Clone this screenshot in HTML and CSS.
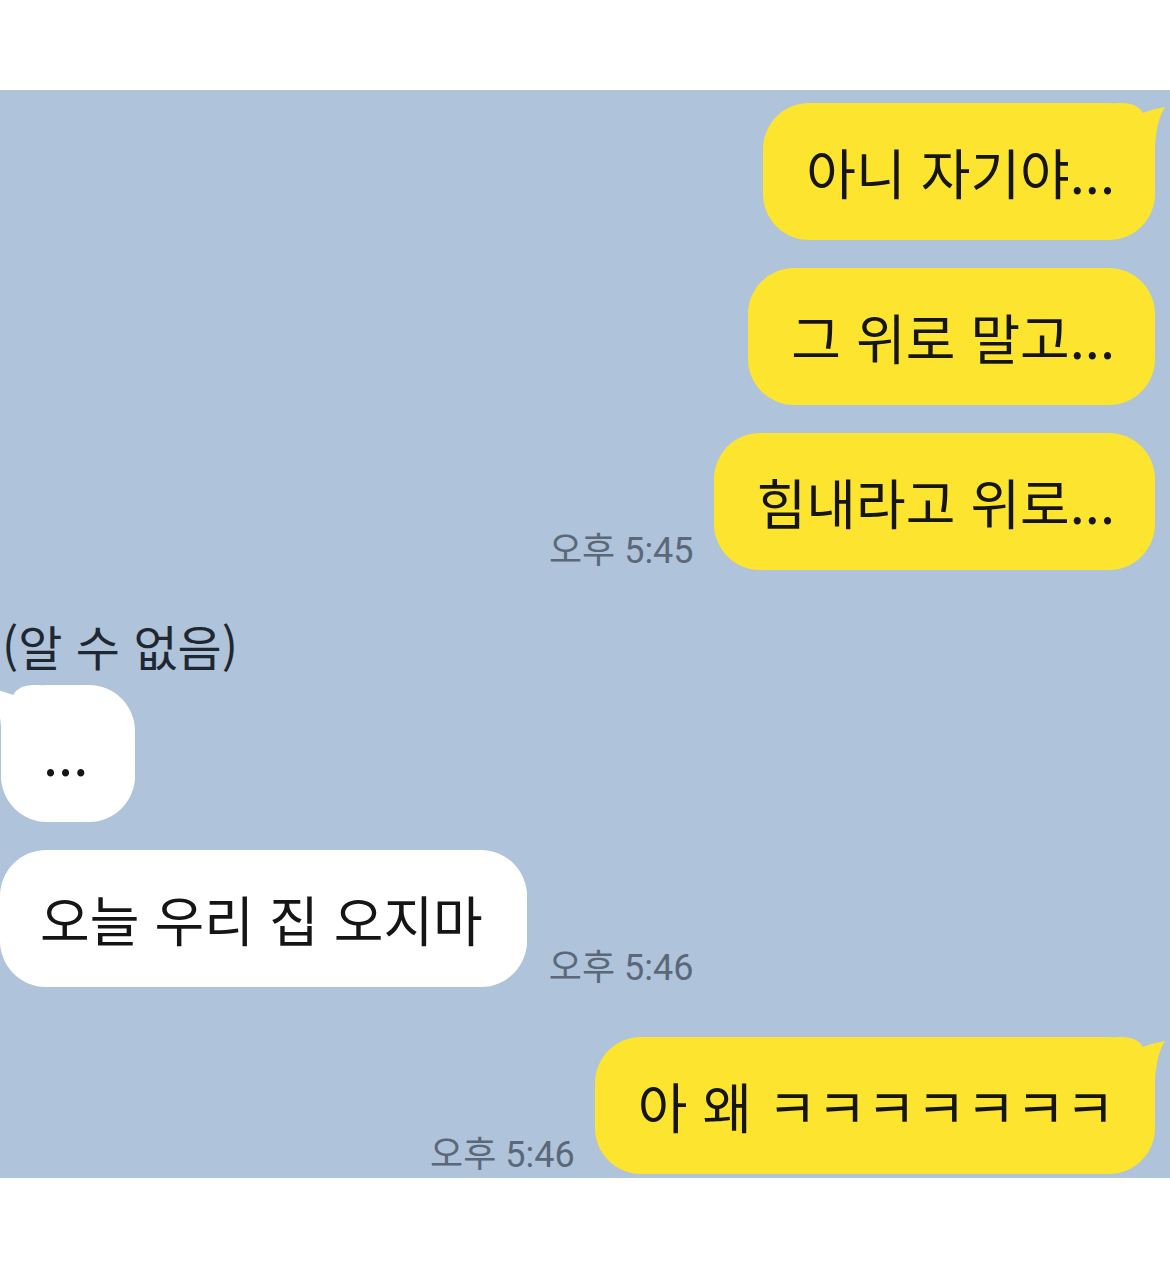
FILE: index.html
```html
<!DOCTYPE html>
<html lang="ko">
<head>
<meta charset="utf-8">
<title>chat</title>
<link rel="stylesheet" href="styles.css">
</head>
<body>
<div class="top-gap"></div>
<main class="chat">
  <div class="row sent first-row">
    <div class="bubble yellow tail-right">아니 자기야...</div>
  </div>
  <div class="row sent gap-s">
    <div class="bubble yellow">그 위로 말고...</div>
  </div>
  <div class="row sent gap-s">
    <span class="time">오후 5:45</span>
    <div class="bubble yellow">힘내라고 위로...</div>
  </div>
  <div class="name">(알 수 없음)</div>
  <div class="row recv">
    <div class="bubble white tail-left dots">...</div>
  </div>
  <div class="row recv gap-s">
    <div class="bubble white">오늘 우리 집 오지마</div>
    <span class="time">오후 5:46</span>
  </div>
  <div class="row sent gap-l">
    <span class="time">오후 5:46</span>
    <div class="bubble yellow tail-right">아 왜 ㅋㅋㅋㅋㅋㅋㅋ</div>
  </div>
</main>
<div class="bottom-gap"></div>
</body>
</html>
```

FILE: styles.css
```css
html, body {
  margin: 0;
  padding: 0;
  background: #ffffff;
}

body {
  font-family: "Noto Sans CJK KR", "Noto Sans", sans-serif;
  width: 1170px;
  height: 1279px;
  overflow: hidden;
}

.top-gap {
  height: 90px;
}

.chat {
  background: #afc3da;
  height: 1088px;
  padding-top: 13px;
  box-sizing: border-box;
  display: flex;
  flex-direction: column;
  overflow: hidden;
}

.row {
  display: flex;
  align-items: flex-end;
}

.sent {
  justify-content: flex-end;
  padding-right: 15px;
  gap: 20px;
}

.recv {
  justify-content: flex-start;
  gap: 22px;
}

.gap-s {
  margin-top: 28px;
}

.gap-l {
  margin-top: 50px;
}

.bubble {
  position: relative;
  font-size: 54px;
  line-height: 61px;
  padding: 38px 40px 38px 43px;
  border-radius: 46px;
  color: #151515;
  white-space: nowrap;
}

.yellow {
  background: #fde42f;
}

.white {
  background: #ffffff;
  padding: 38px 44px 38px 40px;
}

.dots {
  margin-left: 1px;
  padding: 38px 47px 38px 42px;
}

.tail-right::after {
  content: "";
  position: absolute;
  top: 0;
  right: -12px;
  width: 52px;
  height: 46px;
  background: #fde42f;
  clip-path: path("M0 0 L8 0 Q22 0 28 10 Q38 6 50 4 Q42 16 40 42 L40 46 L0 46 Z");
}

.tail-left::after {
  content: "";
  position: absolute;
  top: 0;
  left: -12px;
  width: 52px;
  height: 46px;
  background: #ffffff;
  clip-path: path("M52 0 L44 0 Q30 0 24 10 Q14 6 2 4 Q10 16 12 42 L12 46 L52 46 Z");
}

.time {
  font-family: Roboto, "Noto Sans CJK KR", sans-serif;
  font-size: 36px;
  line-height: 36px;
  color: #5a6878;
  margin-bottom: 1px;
  white-space: nowrap;
}

.name {
  margin-top: 45px;
  font-size: 48px;
  line-height: 60px;
  height: 60px;
  color: #1f2831;
  padding-left: 2px;
  margin-bottom: 10px;
  white-space: nowrap;
}

.bottom-gap {
  height: 101px;
}
```
